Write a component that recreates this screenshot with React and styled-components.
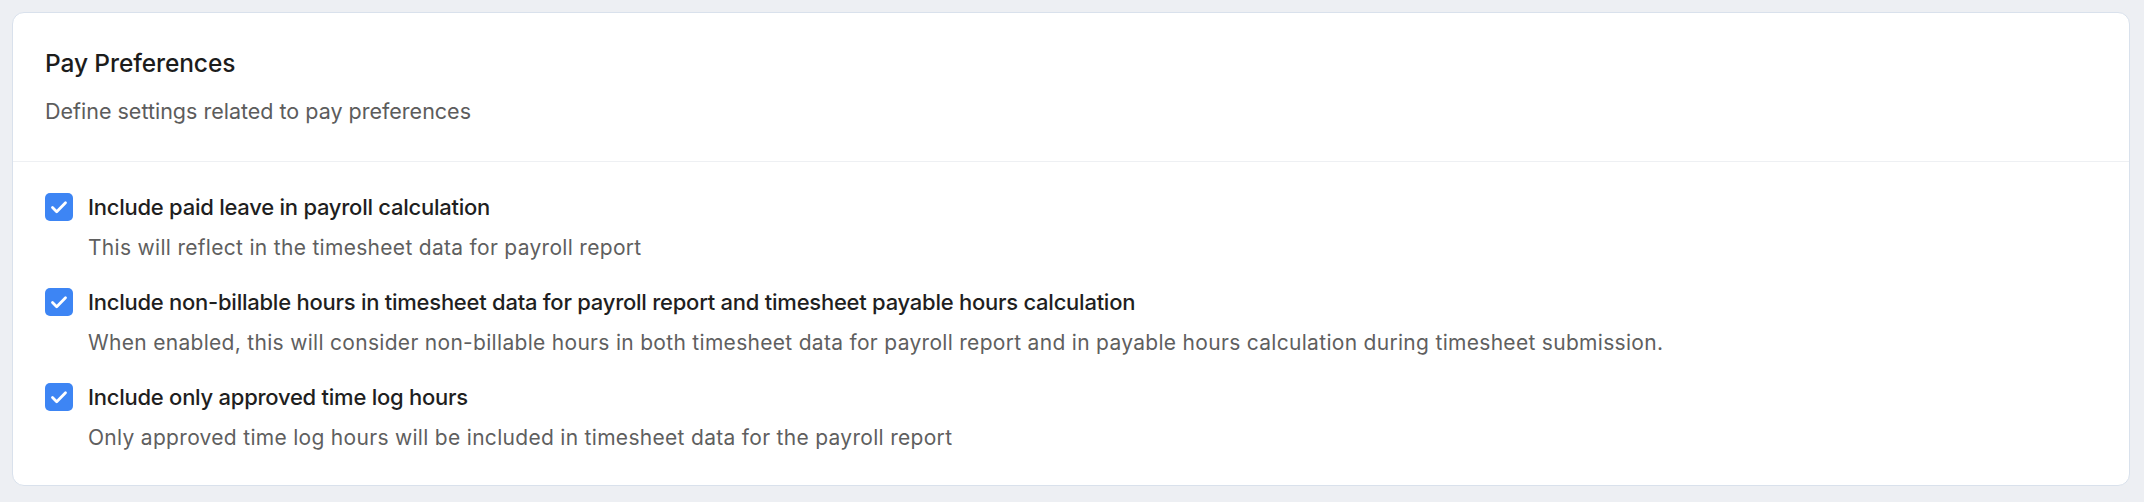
import React from 'react';
import styled, { createGlobalStyle } from 'styled-components';

const GlobalStyle = createGlobalStyle`
    html, body {
        margin: 0;
        padding: 0;
        background: #edeff3;
        font-family: Inter, "Noto Sans", sans-serif;
    }
`;

const Page = styled.div`
    padding: 12px 14px 16px 12px;
`;

const Card = styled.section`
    background: #ffffff;
    border: 1px solid #d9e1ec;
    border-radius: 12px;
`;

const Header = styled.div`
    padding: 34px 32px 36px;
    border-bottom: 1px solid #eef0f3;
`;

const Title = styled.h2`
    margin: 0;
    font-size: 24.5px;
    font-weight: 500;
    line-height: 32px;
    letter-spacing: -0.1px;
    color: #1c1c1c;
`;

const Subtitle = styled.p`
    margin: 18px 0 0;
    font-size: 21.5px;
    line-height: 28px;
    color: #5c5c5c;
`;

const List = styled.div`
    display: flex;
    flex-direction: column;
    gap: 26px;
    padding: 31px 32px 33px;
`;

const Option = styled.div`
    display: grid;
    grid-template-columns: 28px 1fr;
    column-gap: 15px;
    row-gap: 13px;
    align-items: center;
`;

const Box = styled.span`
    display: flex;
    align-items: center;
    justify-content: center;
    width: 28px;
    height: 28px;
    border-radius: 5px;
    background: ${p => (p.checked ? '#3d85f4' : '#ffffff')};
    border: ${p => (p.checked ? 'none' : '1px solid #c4cbd6')};
    box-sizing: border-box;
`;

const Label = styled.div`
    font-size: 22px;
    font-weight: 500;
    line-height: 28px;
    letter-spacing: -0.25px;
    color: #1f1f1f;
`;

const Desc = styled.div`
    grid-column: 2;
    font-size: 21px;
    line-height: 28px;
    letter-spacing: 0.3px;
    color: #5f5f5f;
`;

const Checkbox = ({ checked }) => (
    <Box checked={checked}>
        {checked && (
            <svg width="20" height="20" viewBox="0 0 20 20" fill="none">
                <path d="M3.5 10.5l4.2 4.2L16.5 5.8" stroke="#fff" strokeWidth="2.8" strokeLinecap="round" strokeLinejoin="round" />
            </svg>
        )}
    </Box>
);

const options = [
    {
        label: 'Include paid leave in payroll calculation',
        desc: 'This will reflect in the timesheet data for payroll report',
    },
    {
        label: 'Include non-billable hours in timesheet data for payroll report and timesheet payable hours calculation',
        desc: 'When enabled, this will consider non-billable hours in both timesheet data for payroll report and in payable hours calculation during timesheet submission.',
    },
    {
        label: 'Include only approved time log hours',
        desc: 'Only approved time log hours will be included in timesheet data for the payroll report',
    },
];

const App = () => {
    return (
        <Page>
            <GlobalStyle />
            <Card>
                <Header>
                    <Title>Pay Preferences</Title>
                    <Subtitle>Define settings related to pay preferences</Subtitle>
                </Header>
                <List>
                    {options.map(o => (
                        <Option key={o.label}>
                            <Checkbox checked />
                            <Label>{o.label}</Label>
                            <Desc>{o.desc}</Desc>
                        </Option>
                    ))}
                </List>
            </Card>
        </Page>
    );
};

export default App;
